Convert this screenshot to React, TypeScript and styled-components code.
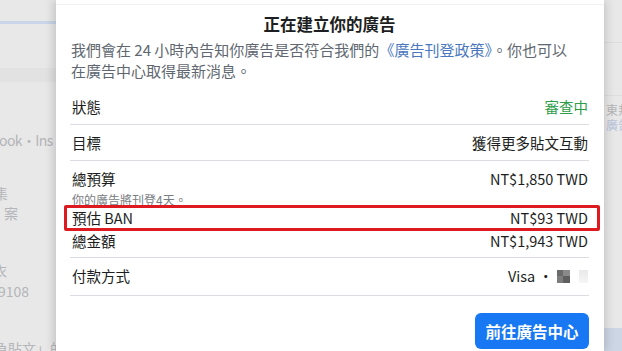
import styled, { createGlobalStyle } from "styled-components";

const GlobalStyle = createGlobalStyle`
  html, body {
    margin: 0;
    padding: 0;
    width: 622px;
    height: 351px;
    overflow: hidden;
    background: #e7e7e7;
  }
  * {
    box-sizing: border-box;
  }
`;

const Screen = styled.div`
  display: flex;
  width: 622px;
  height: 351px;
  overflow: hidden;
  font-family: "Noto Sans CJK TC", "Noto Sans", sans-serif;
`;

const SidePane = styled.div<{ $w: number; $size?: number }>`
  width: ${(p) => p.$w}px;
  flex-shrink: 0;
  height: 100%;
  overflow: hidden;
  background: #e8e8e8;
  display: flex;
  flex-direction: column;
  color: #b4b5b8;
  font-size: ${(p) => p.$size ?? 14}px;
  white-space: nowrap;
`;

const FadedBar = styled.div<{ $top: number; $color: string; $h: number }>`
  margin-top: ${(p) => p.$top}px;
  height: ${(p) => p.$h}px;
  background: ${(p) => p.$color};
  flex-shrink: 0;
`;

const FadedText = styled.div<{ $top: number; $left: number; $blue?: boolean; $tight?: boolean }>`
  margin-top: ${(p) => p.$top}px;
  margin-left: ${(p) => p.$left}px;
  line-height: 14px;
  height: 14px;
  letter-spacing: ${(p) => (p.$tight ? "-0.6px" : "normal")};
  color: ${(p) => (p.$blue ? "#b7c4dc" : "#b4b5b8")};
  flex-shrink: 0;
`;

const Modal = styled.div`
  width: 548px;
  flex-shrink: 0;
  height: 100%;
  background: #ffffff;
  box-shadow: -4px 0 8px rgba(0, 0, 0, 0.12), 4px 0 8px rgba(0, 0, 0, 0.1);
  display: flex;
  flex-direction: column;
  padding: 0 15px 0 14px;
  position: relative;
  z-index: 1;
`;

const TopEdge = styled.div`
  height: 5px;
  margin: 0 -15px 0 -14px;
  border-bottom: 1px solid #f0f0f0;
  flex-shrink: 0;
`;

const Title = styled.h2`
  margin: 8px 0 0;
  text-align: center;
  font-size: 16.5px;
  line-height: 22px;
  font-weight: 700;
  color: #1c1e21;
`;

const Intro = styled.p`
  margin: 4px 0 0 1px;
  font-size: 15px;
  line-height: 21px;
  color: #606770;
`;

const PolicyLink = styled.span`
  color: #4a78c0;
`;

const Row = styled.div<{ $pt?: number; $pb?: number }>`
  display: flex;
  justify-content: space-between;
  align-items: center;
  padding: ${(p) => p.$pt ?? 8}px 1px ${(p) => p.$pb ?? 7}px 2px;
  line-height: 20px;
  font-size: 14.5px;
  color: #1c1e21;
  border-bottom: 1px solid #dadde1;
`;

const Group = styled.div`
  padding: 8px 0 6px;
  border-bottom: 1px solid #dadde1;
  display: flex;
  flex-direction: column;
`;

const Line = styled.div`
  display: flex;
  justify-content: space-between;
  align-items: center;
  padding: 0 1px 0 2px;
  line-height: 20px;
  height: 20px;
  font-size: 14.5px;
  color: #1c1e21;
`;

const Note = styled.div`
  padding: 2px 0 0 2px;
  margin-bottom: -4px;
  font-size: 12px;
  line-height: 18px;
  height: 20px;
  color: #7a7d82;
`;

const Highlight = styled.div`
  display: flex;
  justify-content: space-between;
  align-items: center;
  margin: 0 -11px 0 -6px;
  padding: 0 9px 0 5px;
  height: 26px;
  line-height: 20px;
  font-size: 14.5px;
  color: #1c1e21;
  border: 3px solid #dc1a1f;
  border-radius: 2px;
  position: relative;
`;

const Value = styled.span<{ $green?: boolean }>`
  color: ${(p) => (p.$green ? "#2e9e4b" : "#1c1e21")};
  display: flex;
  align-items: center;
`;

const Mosaic = styled.span`
  display: inline-grid;
  grid-template-columns: 6px 7px;
  grid-template-rows: 6px 7px;
  margin-left: 4px;
`;

const Pixel = styled.span<{ $c: string }>`
  background: ${(p) => p.$c};
`;

const Blur = styled.span`
  width: 9px;
  height: 13px;
  margin-left: 9px;
  background: linear-gradient(#e9e9e9, #f6f6f6);
`;

const Footer = styled.div`
  display: flex;
  justify-content: flex-end;
  padding-top: 17px;
`;

const PrimaryButton = styled.button`
  width: 114px;
  height: 36px;
  border: none;
  border-radius: 6px;
  background: #1877f2;
  color: #ffffff;
  font-family: "Noto Sans CJK TC", sans-serif;
  font-size: 15.5px;
  font-weight: 700;
  padding: 0;
`;

export default function App() {
  return (
    <>
      <GlobalStyle />
      <Screen>
        <SidePane $w={56}>
          <FadedBar $top={21} $h={3} $color="#c9d5e8" />
          <FadedBar $top={44} $h={14} $color="#e2e2e2" />
          <FadedText $top={51} $left={-1} $tight>ook·Ins</FadedText>
          <FadedText $top={39} $left={-6}>集</FadedText>
          <FadedText $top={6} $left={4}>案</FadedText>
          <FadedText $top={43} $left={-7}>衣</FadedText>
          <FadedText $top={7} $left={-2}>9108</FadedText>
          <FadedText $top={43} $left={-6}>負貼文」的</FadedText>
        </SidePane>
        <Modal>
          <TopEdge />
          <Title>正在建立你的廣告</Title>
          <Intro>
            我們會在 24 小時內告知你廣告是否符合我們的
            <PolicyLink>《廣告刊登政策》</PolicyLink>。你也可以
            <br />
            在廣告中心取得最新消息。
          </Intro>
          <Row $pt={16}>
            <span>狀態</span>
            <Value $green>審查中</Value>
          </Row>
          <Row>
            <span>目標</span>
            <Value>獲得更多貼文互動</Value>
          </Row>
          <Group>
            <Line>
              <span>總預算</span>
              <Value>NT$1,850 TWD</Value>
            </Line>
            <Note>你的廣告將刊登4天。</Note>
            <Highlight>
              <span>預估 BAN</span>
              <Value>NT$93 TWD</Value>
            </Highlight>
            <Line>
              <span>總金額</span>
              <Value>NT$1,943 TWD</Value>
            </Line>
          </Group>
          <Row $pt={8} $pb={9}>
            <span>付款方式</span>
            <Value>
              Visa •
              <Mosaic>
                <Pixel $c="#6b6b6b" />
                <Pixel $c="#8a8a8a" />
                <Pixel $c="#7d7d7d" />
                <Pixel $c="#5f5f5f" />
              </Mosaic>
              <Blur />
            </Value>
          </Row>
          <Footer>
            <PrimaryButton>前往廣告中心</PrimaryButton>
          </Footer>
        </Modal>
        <SidePane $w={18} $size={12}>
          <FadedBar $top={42} $h={1} $color="#dcdcdc" />
          <FadedBar $top={52} $h={1} $color="#dedede" />
          <FadedText $top={7} $left={2}>東邦</FadedText>
          <FadedText $top={1} $left={2} $blue>廣告</FadedText>
          <FadedBar $top={196} $h={30} $color="#cdd6e4" />
        </SidePane>
      </Screen>
    </>
  );
}
